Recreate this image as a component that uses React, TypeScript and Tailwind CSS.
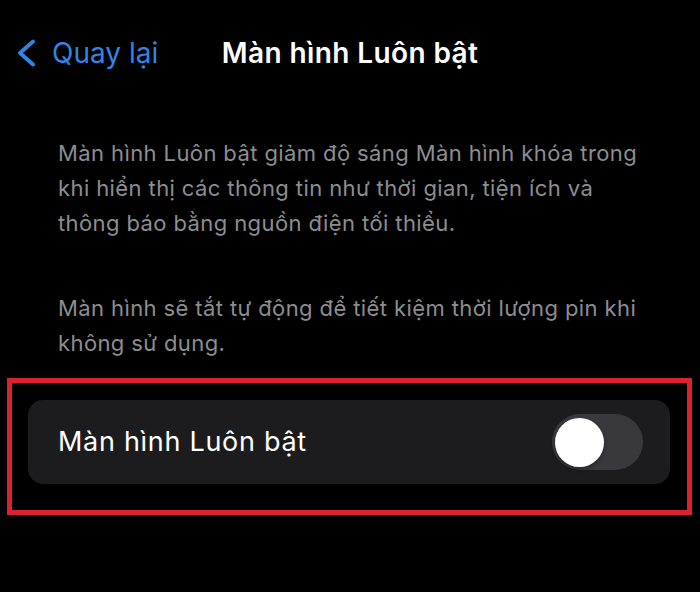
import React from 'react';

const Toggle = () => (
  <div className="w-[91px] h-[56px] rounded-full bg-[#39393d] p-[3px] flex items-center">
    <div className="w-[49px] h-[49px] rounded-full bg-white shadow-[0_2px_4px_rgba(0,0,0,0.35)]" />
  </div>
);

export default function App() {
  return (
    <div className="w-[700px] h-[592px] bg-black text-white font-['Inter','Noto_Sans',sans-serif] flex flex-col">
      {/* thanh điều hướng */}
      <div className="grid grid-cols-[1fr_auto_1fr] items-center h-[56px] mt-[25px]">
        <div className="flex items-center pl-[16px] gap-[16px] text-[#3185e6]">
          <svg width="20" height="28" viewBox="0 0 20 28" fill="none">
            <path d="M17 2.5 L4 14 L17 25.5" stroke="currentColor" strokeWidth="3.8" strokeLinecap="round" strokeLinejoin="round" />
          </svg>
          <span className="text-[28px] leading-none">Quay lại</span>
        </div>
        <div className="text-[28px] font-semibold leading-none tracking-[0.4px]">Màn hình Luôn bật</div>
        <div />
      </div>

      {/* mô tả */}
      <div className="pl-[58px] mt-[55px] w-[648px] text-[#8d8d92] text-[22px] leading-[35px] tracking-[0.4px] flex flex-col gap-[50px]">
        <p>Màn hình Luôn bật giảm độ sáng Màn hình khóa trong khi hiển thị các thông tin như thời gian, tiện ích và thông báo bằng nguồn điện tối thiểu.</p>
        <p>Màn hình sẽ tắt tự động để tiết kiệm thời lượng pin khi không sử dụng.</p>
      </div>

      {/* khung đỏ đánh dấu */}
      <div className="mt-[17px] ml-[7px] w-[685px] h-[137px] border-[5px] border-[#d9232e] pl-[16px] pr-[17px] pt-[17px]">
        <div className="h-[84px] rounded-[15px] bg-[#1c1c1e] flex items-center justify-between pl-[30px] pr-[27px]">
          <span className="text-[27px] tracking-[0.7px]">Màn hình Luôn bật</span>
          <Toggle />
        </div>
      </div>
    </div>
  );
}
